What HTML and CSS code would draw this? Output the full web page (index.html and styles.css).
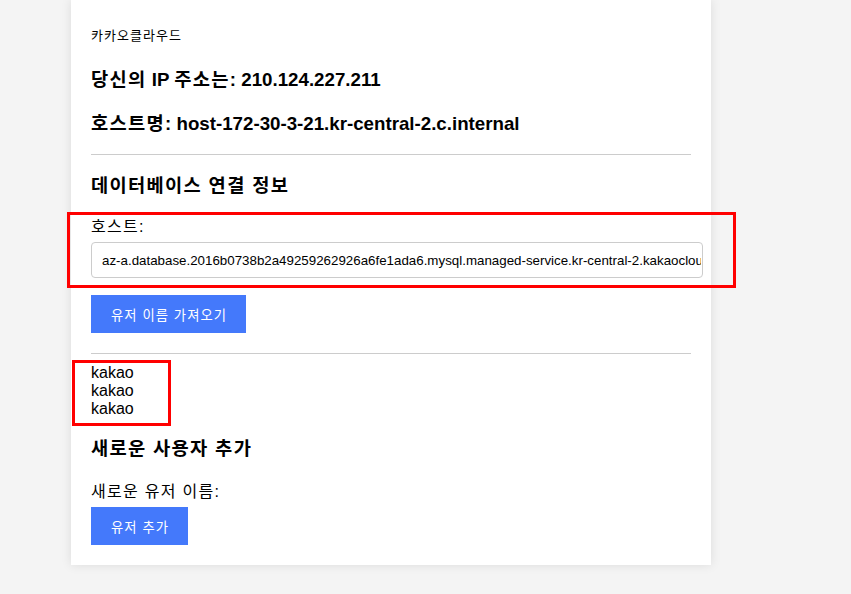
FILE: index.html
```html
<!DOCTYPE html>
<html lang="ko">
<head>
<meta charset="utf-8">
<title>카카오클라우드</title>
<link rel="stylesheet" href="styles.css">
</head>
<body>
<div class="card">
  <p class="brand"><span class="ko">카카오클라우드</span></p>
  <h3 class="title first"><span class="ko">당신의</span> IP <span class="ko">주소는</span>: 210.124.227.211</h3>
  <h3 class="title"><span class="ko">호스트명</span>: host-172-30-3-21.kr-central-2.c.internal</h3>
  <hr class="rule">
  <h3 class="title section"><span class="ko">데이터베이스 연결 정보</span></h3>
  <label class="label db-label" for="host"><span class="ko">호스트</span>:</label>
  <input class="field" id="host" type="text" value="az-a.database.2016b0738b2a49259262926a6fe1ada6.mysql.managed-service.kr-central-2.kakaocloud.com">
  <button class="btn fetch" type="button"><span class="ko">유저 이름 가져오기</span></button>
  <hr class="rule rule-2">
  <div class="users">
    <div>kakao</div>
    <div>kakao</div>
    <div>kakao</div>
  </div>
  <h3 class="title add"><span class="ko">새로운 사용자 추가</span></h3>
  <label class="label new-label" for="newuser"><span class="ko">새로운 유저 이름</span>:</label>
  <button class="btn add-btn" type="button"><span class="ko">유저 추가</span></button>
</div>
<div class="mark mark-host"></div>
<div class="mark mark-users"></div>
</body>
</html>
```
FILE: styles.css
```css
html, body {
  margin: 0;
  padding: 0;
}
body {
  background: #f4f4f4;
  font-family: "Liberation Sans", "Noto Sans CJK KR", Arial, sans-serif;
  color: #000;
  position: relative;
  min-height: 594px;
}
.ko {
  letter-spacing: 0.08em;
}
.title .ko {
  letter-spacing: 0.07em;
}
.card {
  margin-left: 71px;
  width: 640px;
  box-sizing: border-box;
  padding: 28px 20px 20px;
  background: #fff;
  box-shadow: 0 0 10px rgba(0, 0, 0, 0.1);
}
.brand {
  margin: 0;
  font-size: 13px;
  line-height: 16px;
}
.title {
  margin: 20px 0 0;
  font-size: 18.72px;
  line-height: 24px;
  font-weight: bold;
}
.title.first {
  margin-top: 24px;
}
.title.section {
  margin-top: 19px;
}
.title.add {
  margin-top: 19px;
}
.rule {
  margin: 18px 0 0;
  border: 0;
  border-top: 1px solid #ccc;
  height: 0;
}
.rule-2 {
  margin-top: 20px;
}
.label {
  display: block;
  font-size: 16px;
  line-height: 18px;
}
.db-label {
  margin-top: 20px;
}
.new-label {
  margin-top: 22px;
}
.field {
  display: block;
  margin-top: 6px;
  width: 612px;
  height: 36px;
  box-sizing: border-box;
  border: 1px solid #ccc;
  border-radius: 4px;
  padding: 0 1px 0 10px;
  font-family: "Liberation Sans", "Noto Sans CJK KR", Arial, sans-serif;
  font-size: 13.33px;
  color: #000;
  background: #fff;
}
.btn {
  display: block;
  height: 38px;
  padding: 0 19px 0 20px;
  border: 0;
  background: #4479fb;
  color: #fff;
  white-space: nowrap;
  font-family: "Liberation Sans", "Noto Sans CJK KR", Arial, sans-serif;
  font-size: 13.33px;
}
.fetch {
  margin-top: 17px;
}
.add-btn {
  margin-top: 6px;
}
.users {
  margin-top: 10px;
  font-size: 16px;
  line-height: 18px;
}
.mark {
  position: absolute;
  box-sizing: border-box;
  border: 3px solid #f00;
}
.mark-host {
  left: 67px;
  top: 212px;
  width: 669px;
  height: 76px;
}
.mark-users {
  left: 72px;
  top: 360px;
  width: 99px;
  height: 66px;
}
```
